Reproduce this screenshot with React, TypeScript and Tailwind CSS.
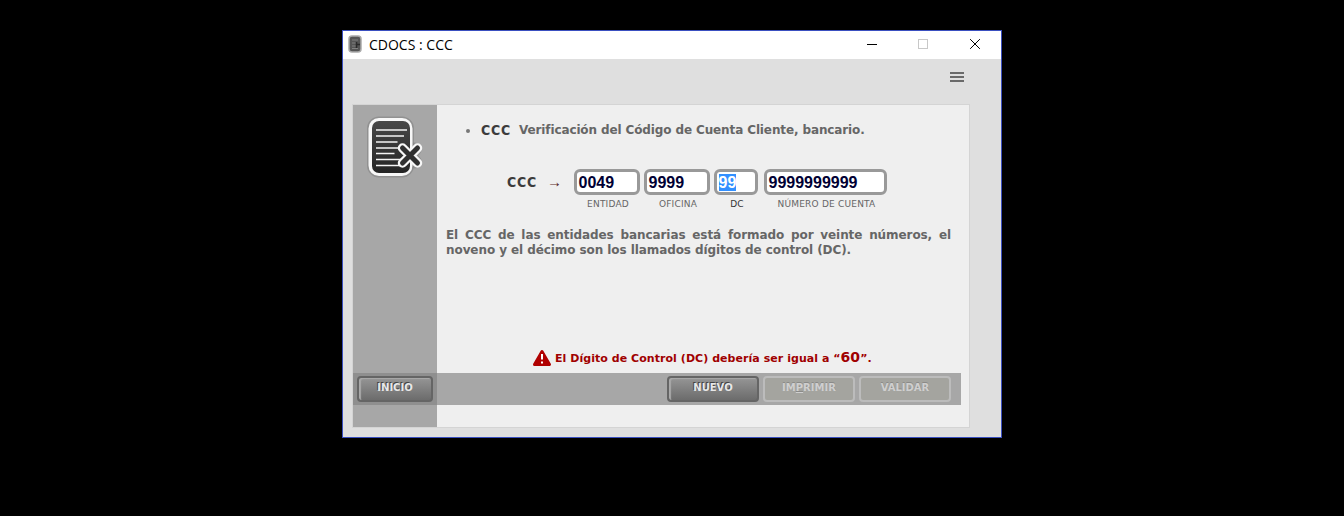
import type { ReactNode } from "react";

function DocumentIcon() {
  return (
    <svg width="60" height="64" viewBox="0 0 60 64" className="block">
      <defs>
        <linearGradient id="page" x1="0" y1="0" x2="0" y2="1">
          <stop offset="0" stopColor="#484848" />
          <stop offset="1" stopColor="#242424" />
        </linearGradient>
      </defs>
      <g fill="none" strokeLinecap="round" strokeLinejoin="round">
        <rect x="4" y="4.500" width="41" height="55" rx="9" stroke="#808080" strokeWidth="6" opacity=".55" />
        <path d="M36.500 34.500l12 12M48.500 34.500l-12 12" stroke="#808080" strokeWidth="14" opacity=".55" />
        <rect x="5" y="5.500" width="39" height="53" rx="8" stroke="#f7f7f7" strokeWidth="5" />
      </g>
      <rect x="6" y="6" width="38" height="52" rx="7" fill="url(#page)" />
      <path d="M10 15h31M10 21h28M10 27h21.500M10 33h27M10 38.500h18.500M10 44.500h27M10 50.500h27" stroke="#f4f4f4" strokeWidth="1.700" />
      <g fill="none" strokeLinecap="round">
        <path d="M36.500 33l15 15M51.500 33l-15 15" stroke="#f7f7f7" strokeWidth="9.500" />
        <path d="M36.500 33l15 15M51.500 33l-15 15" stroke="#303030" strokeWidth="5" />
      </g>
    </svg>
  );
}

function TitleIcon() {
  return (
    <svg width="14" height="18" viewBox="0 0 14 18" className="-mt-[2px] block">
      <rect x="1" y="1" width="12" height="16" rx="3" fill="#555" stroke="#aaa" strokeWidth="1.500" />
      <path d="M4 5h6M4 8h4M4 11h4M4 13.500h6" stroke="#808080" />
      <path d="M8.500 7v6M9 9.500h3" stroke="#2b2b2b" strokeWidth="1.500" />
    </svg>
  );
}

function Field({ value, label, width, selected }: { value: string; label: string; width: string; selected?: boolean }) {
  return (
    <div className={width}>
      <div className="flex h-[26px] items-center rounded-md border-[3px] border-[#999] bg-white pl-[1.500px] font-['Liberation_Sans',sans-serif] text-base leading-[17px] font-bold text-[#000033]">
        <span className={selected ? "bg-[#3390ff] text-white" : ""}>{value}</span>
      </div>
      <div className={`mt-[3px] pl-[2px] text-center text-[9px] leading-3 tracking-[0.2px] whitespace-nowrap ${selected ? "text-[#333]" : "text-[#666]"}`}>{label}</div>
    </div>
  );
}

function Button({ children, disabled, width }: { children: ReactNode; disabled?: boolean; width: string }) {
  const look = disabled
    ? "border-[#bcbcbc] bg-[#a4a49f] text-[#cfcfcf] [text-shadow:0_-1px_0_#8a8a88]"
    : "border-[#656565] bg-linear-to-b from-[#959595] to-[#6c6c6c] text-[#e8e8e8] shadow-[inset_2px_1px_1px_#a9a9a9] [text-shadow:-1px_-1px_0_#444]";
  return (
    <button disabled={disabled} className={`block h-[26px] rounded border-2 pb-[3px] text-[10px] leading-3 font-bold ${width} ${look}`}>
      {children}
    </button>
  );
}

function Code() {
  return <span className="w-[30px] font-['DejaVu_Sans_Condensed',sans-serif] text-[14px] font-bold tracking-[0.700px] text-[#3c3c3c]">CCC</span>;
}

export default function App() {
  return (
    <div className="h-[516px] w-[1344px] bg-black pt-[30px] pl-[342px] font-['DejaVu_Sans',sans-serif]">
      <div className="flex h-[408px] w-[660px] flex-col border border-[#3a4fc0] bg-[#dfdfdf]">
        <header className="flex h-7 items-center bg-white pl-[5px] text-black">
          <TitleIcon />
          <span className="-mt-[2px] ml-[7px] flex-1 font-['Open_Sans',sans-serif] text-[14px]">CDOCS : CCC</span>
          <svg width="120" height="14" viewBox="0 0 120 14" className="-mt-[2px] mr-[18px]" fill="none" shapeRendering="crispEdges">
            <path d="M4 7.500h10" stroke="#000" />
            <rect x="55.500" y="2.500" width="9" height="9" stroke="#c8c8c8" />
            <path d="M107.500 2.500l9 9M116.500 2.500l-9 9" stroke="#000" strokeLinecap="square" shapeRendering="auto" />
          </svg>
        </header>
        <div className="flex h-[45px] justify-end pt-[13px] pr-[37px]">
          <svg width="14" height="10" viewBox="0 0 14 10">
            <path d="M0 1h14M0 5h14M0 9h14" stroke="#6a6a6a" strokeWidth="2" />
          </svg>
        </div>
        <main className="ml-[9px] flex h-[324px] w-[618px] flex-col border border-[#d4d4d4] bg-[#efefef]">
          <div className="flex h-[268px]">
            <aside className="w-[84px] bg-[#a7a7a7] pt-[10px] pl-[13px]">
              <DocumentIcon />
            </aside>
            <section className="flex flex-1 flex-col pr-[18px] pl-[9px] text-[12px] leading-[15px] font-bold text-[#666]">
              <div className="mt-[18px] flex h-[15px] items-center whitespace-nowrap">
                <span className="ml-[20px] size-1 rounded-full bg-[#777]" />
                <span className="ml-[11px] flex"><Code /></span>
                <span className="ml-[8px] tracking-[-0.120px]">Verificación del Código de Cuenta Cliente, bancario.</span>
              </div>
              <div className="mt-[31px] ml-[61px] flex font-normal">
                <span className="mt-[6px] flex"><Code /></span>
                <span className="mt-[6px] ml-[10px] w-[27px] font-['Liberation_Serif',serif] text-[15px] text-[#5a2a2a]">→</span>
                <div className="flex gap-[4px]">
                  <Field value="0049" label="ENTIDAD" width="w-[66px]" />
                  <Field value="9999" label="OFICINA" width="w-[66px]" />
                  <Field value="99" label="DC" width="w-[44px]" selected />
                  <div className="ml-[2px]">
                    <Field value="9999999999" label="NÚMERO DE CUENTA" width="w-[123px]" />
                  </div>
                </div>
              </div>
              <p className="mt-[18px] w-[505px] text-justify tracking-[-0.080px]">
                El CCC de las entidades bancarias está formado por veinte números, el noveno y el décimo son los llamados dígitos de control (DC).
              </p>
              <div className="mt-auto mb-[6px] ml-[86px] flex h-[18px] items-center text-[11px] text-[#a00000]">
                <svg width="20" height="18" viewBox="0 0 20 18">
                  <path d="M10 2.500L17.500 15.500h-15z" fill="#b00000" stroke="#b00000" strokeWidth="3" strokeLinejoin="round" />
                  <path d="M10 5v5.500M10 12.500v2" stroke="#fff" strokeWidth="2" />
                </svg>
                <span className="ml-[3px] tracking-[0.050px] whitespace-nowrap">
                  El Dígito de Control (DC) debería ser igual a “<b className="text-[14px]">60</b>”.
                </span>
              </div>
            </section>
          </div>
          <div className="flex h-8 w-[608px] bg-[#a7a7a7]">
            <div className="w-[84px] bg-[#8f8f8f] pt-[3px] pl-[4px]">
              <Button width="w-[76px]">INICIO</Button>
            </div>
            <div className="flex flex-1 justify-end gap-1 pt-[3px] pr-[10px]">
              <Button width="w-[92px]">NUEVO</Button>
              <Button width="w-[92px]" disabled>IM<span className="underline">P</span>RIMIR</Button>
              <Button width="w-[92px]" disabled>VALIDAR</Button>
            </div>
          </div>
          <div className="w-[84px] flex-1 bg-[#a7a7a7]" />
        </main>
      </div>
    </div>
  );
}
